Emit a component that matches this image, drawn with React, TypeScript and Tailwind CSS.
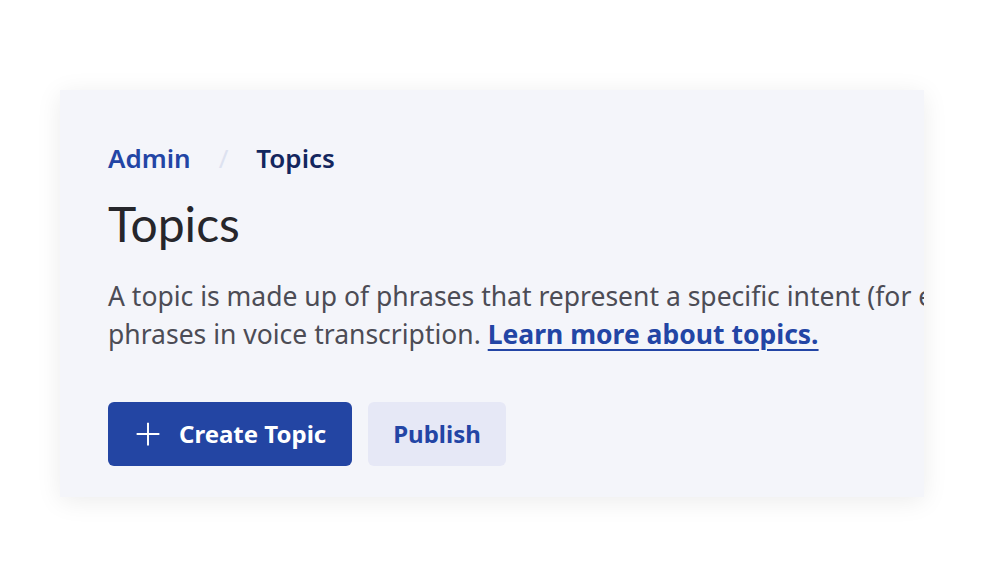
import React from 'react';

export default function App() {
  return (
    <div className="min-h-screen w-full bg-white pt-[90px] pl-[60px] pr-[60px]" style={{ fontFamily: '"Noto Sans", sans-serif' }}>
      <div className="h-[407px] w-[864px] overflow-hidden bg-[#f4f5fa] shadow-[0_4px_24px_rgba(0,0,0,0.08)] pl-12 pt-[40px]">
        <nav className="flex items-center whitespace-nowrap text-[26px] font-semibold leading-[56px]">
          <a className="text-[#2345a5]">Admin</a>
          <span className="mx-[28px] font-normal text-[#dde2f0]">/</span>
          <span className="text-[#13265e]">Topics</span>
        </nav>
        <h1 className="mt-[8px] text-[48px] leading-[60px] text-[#26262b]" style={{ fontFamily: 'Lato, sans-serif' }}>
          Topics
        </h1>
        <p className="mt-[23px] w-[1100px] whitespace-nowrap text-[26.5px] leading-[38px] text-[#4c4c55]">
          A topic is made up of phrases that represent a specific intent (for example, cancelling a subscription) used to find matching
          <br />
          phrases in voice transcription.{' '}
          <a className="font-bold text-[#2345a5] underline decoration-2 underline-offset-[5px]">Learn more about topics.</a>
        </p>
        <div className="mt-[49px] flex gap-4">
          <button className="flex h-16 w-[244px] items-center gap-[18px] rounded-md bg-[#2345a3] pl-[27px] text-[24px] font-bold text-white">
            <svg width="26" height="26" viewBox="0 0 24 24" fill="none" stroke="currentColor" strokeWidth="1.8">
              <path d="M12 1.5v21M1.5 12h21" />
            </svg>
            Create Topic
          </button>
          <button className="h-16 w-[138px] rounded-md bg-[#e6e8f6] text-[24px] font-bold text-[#2345a5]">Publish</button>
        </div>
      </div>
    </div>
  );
}
